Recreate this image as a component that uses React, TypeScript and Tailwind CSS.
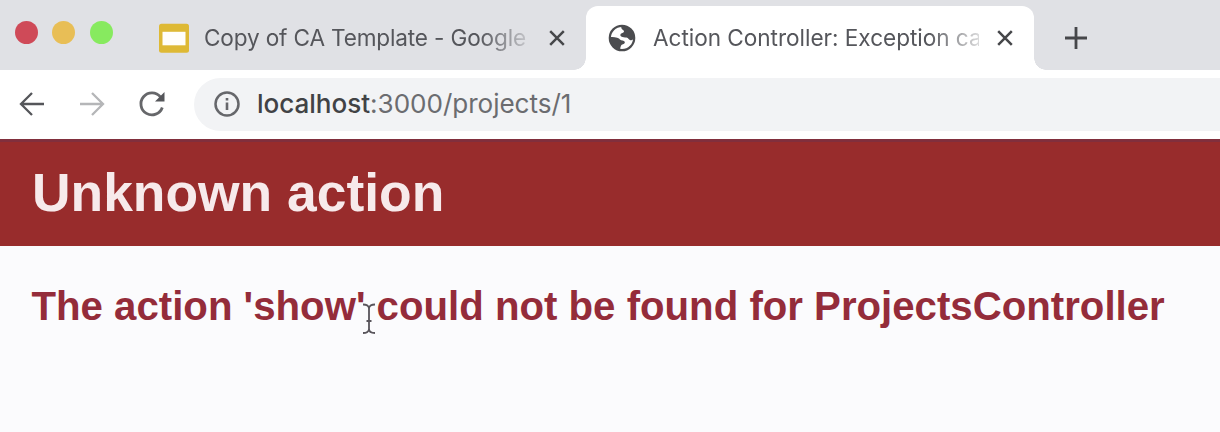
import React from "react";

function CloseIcon() {
  return (
    <svg width="18" height="18" viewBox="0 0 18 18" fill="none" stroke="#46474a" strokeWidth="2.5" className="shrink-0">
      <path d="M2.2 2.2 15.8 15.8M15.8 2.2 2.2 15.8" />
    </svg>
  );
}

function GlobeIcon() {
  return (
    <svg width="28" height="28" viewBox="0 0 28 28" className="shrink-0">
      <circle cx="14" cy="14" r="12.2" fill="#fff" stroke="#4b4c4f" strokeWidth="2.2" />
      <path
        fill="#4b4c4f"
        d="M13.5 2.2C19.5 1.8 25.8 6.5 26.2 13.5C25.6 15.5 24 16.6 22.5 16.2C21 15.8 20.4 14 18.5 13.5C16.5 13.2 15 13.4 13.2 12.4C11.8 11.5 12.2 9.6 13.8 9.2C15.5 8.8 16.4 8.3 15.8 6.8C15 5.4 12.5 5 13.5 2.2Z M1.8 13C5 13 9 13 11 14.5C12 16 14 16.5 16 17C17.5 18 16.8 20 15 20.2C12.8 20.4 13 22 12.4 23.5L12 26C6 25 1.8 20 1.8 13Z"
      />
    </svg>
  );
}

function SlidesIcon() {
  return (
    <svg width="30" height="30" viewBox="0 0 30 30" className="shrink-0">
      <rect y="0.8" width="30" height="29" rx="2.5" fill="#deb935" />
      <rect x="3.5" y="8.8" width="23" height="13.5" fill="#fffefa" />
    </svg>
  );
}

function Tabs() {
  return (
    <div className="flex h-[70px] items-end bg-[#e0e1e5]">
      <div className="flex h-full w-[586px] items-start">
        <div className="ml-[14.5px] mt-[20.5px] flex gap-[14.5px]">
          <span className="size-[23px] rounded-full bg-[#cf4a58]" />
          <span className="size-[23px] rounded-full bg-[#e8be56]" />
          <span className="size-[23px] rounded-full bg-[#87ea5f]" />
        </div>
        <div className="ml-[46.5px] mt-[6px] flex h-[64px] items-center">
          <SlidesIcon />
          <span className="ml-[15px] w-[324px] whitespace-nowrap text-[22.6px] tracking-[-0.16px] text-[#55565b] [mask-image:linear-gradient(to_right,black_275px,transparent_335px)]">
            Copy of CA Template - Google
          </span>
          <span className="ml-[20px] flex">
            <CloseIcon />
          </span>
        </div>
      </div>
      <div className="relative flex h-[64px] w-[448px] items-center rounded-t-[12px] bg-white">
        <span className="absolute -left-[12px] bottom-0 size-[12px] bg-[radial-gradient(circle_at_0_0,transparent_11.5px,white_12px)]" />
        <span className="absolute -right-[12px] bottom-0 size-[12px] bg-[radial-gradient(circle_at_100%_0,transparent_11.5px,white_12px)]" />
        <span className="ml-[22px] flex">
          <GlobeIcon />
        </span>
        <span className="ml-[17px] w-[326px] whitespace-nowrap text-[22.6px] tracking-[-0.04px] text-[#55565b] [mask-image:linear-gradient(to_right,black_275px,transparent_340px)]">
          Action Controller: Exception ca
        </span>
        <span className="ml-[17px] flex">
          <CloseIcon />
        </span>
      </div>
      <div className="ml-[30px] flex h-[64px] items-center">
        <svg width="24" height="24" viewBox="0 0 24 24" stroke="#46474a" strokeWidth="2.8">
          <path d="M12 1v22M1 12h22" />
        </svg>
      </div>
    </div>
  );
}

function Toolbar() {
  return (
    <div className="flex h-[69px] items-center bg-white pb-px">
      <svg width="26" height="26" viewBox="0 0 26 26" fill="none" stroke="#55565a" strokeWidth="2.3" className="ml-[19px]">
        <path d="M25 13H2M13 2 2 13l11 11" />
      </svg>
      <svg width="26" height="26" viewBox="0 0 26 26" fill="none" stroke="#b5b6b8" strokeWidth="2.3" className="ml-[34px]">
        <path d="M1 13h23M13 2l11 11-11 11" />
      </svg>
      <svg width="28" height="28" viewBox="0 0 28 28" fill="none" stroke="#66676a" strokeWidth="2.8" className="ml-[33px]">
        <path d="M24.3 17.5A11 11 0 1 1 22.5 7" />
        <path d="M26.5 2v9.5h-9.5z" fill="#55565a" stroke="none" />
      </svg>
      <div className="ml-[28px] flex h-[53px] flex-1 items-center rounded-l-full bg-[#f2f3f5]">
        <svg width="26" height="26" viewBox="0 0 26 26" fill="none" stroke="#66676b" strokeWidth="2.5" className="ml-[20px]">
          <circle cx="13" cy="13" r="11.5" />
          <path d="M13 11.5v7.5M13 7v2.6" strokeWidth="2.6" />
        </svg>
        <span className="ml-[17px] whitespace-nowrap text-[26.1px] tracking-[-0.04px] text-[#6b6c70]">
          <span className="font-[450] text-[#414245]">localhost</span>:3000/projects/1
        </span>
      </div>
    </div>
  );
}

export default function App() {
  return (
    <div className="flex h-[432px] w-[1220px] flex-col overflow-hidden bg-[#fbfbfd] font-['Inter',sans-serif]">
      <Tabs />
      <Toolbar />
      <header className="flex h-[107px] items-center border-t-[3px] border-[#812f3d] bg-[#982c2c] pb-[3px] pl-[32px] font-['Liberation_Sans',sans-serif]">
        <h1 className="whitespace-nowrap text-[53.4px] leading-none font-bold text-[#f7eaeb]">Unknown action</h1>
      </header>
      <main className="relative px-[31.5px] pt-[38px] font-['Liberation_Sans',sans-serif]">
        <h2 className="whitespace-nowrap text-[40.2px] leading-[46px] font-bold text-[#942c3a]">
          The action 'show' could not be found for ProjectsController
        </h2>
        <svg width="14" height="32" viewBox="0 0 14 32" fill="none" stroke="#58545b" strokeWidth="1.8" className="absolute left-[362px] top-[57px]">
          <path d="M1 1.5c3 0 6 1 6 4 0-3 3-4 6-4M7 5v21M4.5 18h5M1 30c3 0 6-1 6-4 0 3 3 4 6 4" />
        </svg>
      </main>
    </div>
  );
}
